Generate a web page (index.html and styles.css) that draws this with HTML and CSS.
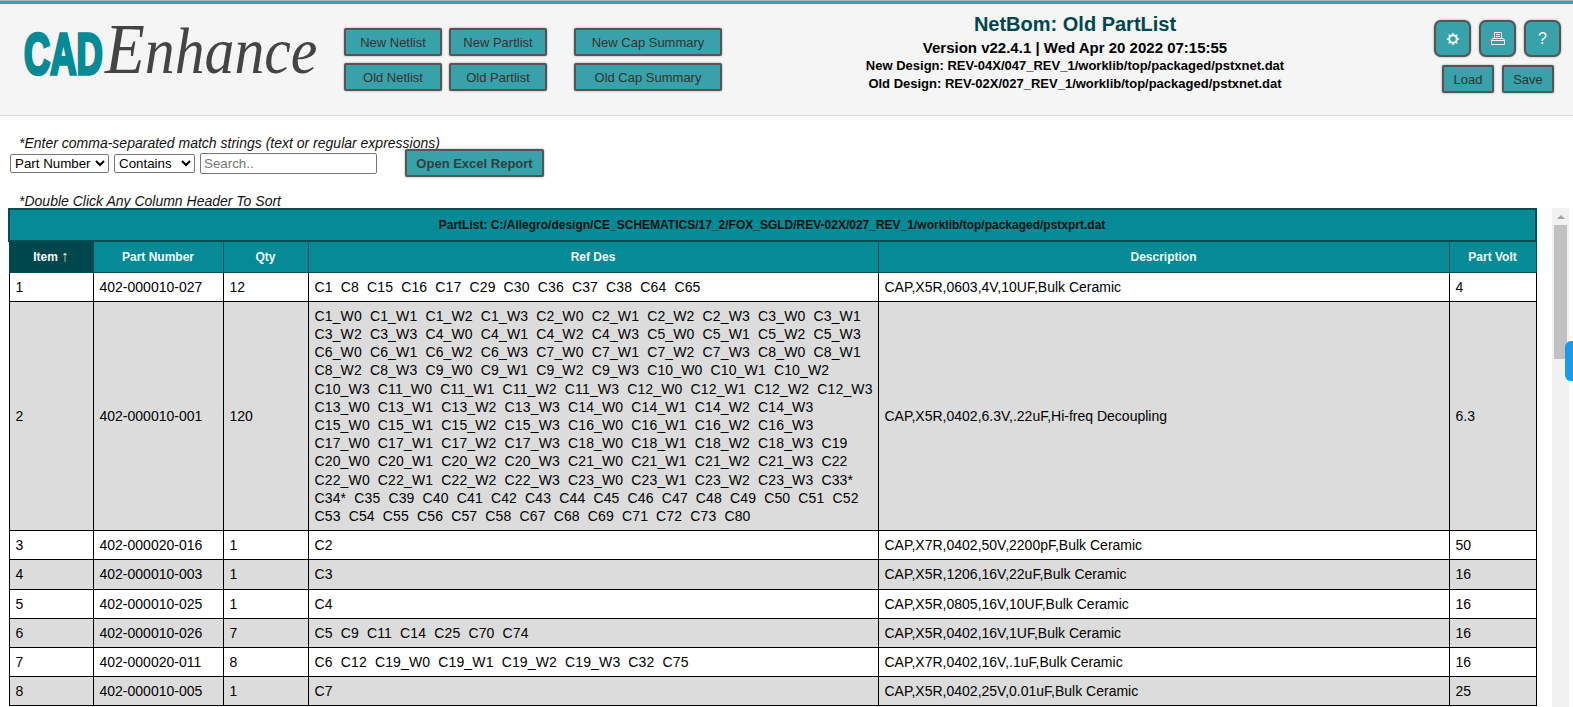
FILE: index.html
```html
<!DOCTYPE html>
<html lang="en">
<head>
<meta charset="utf-8">
<title>NetBom: Old PartList</title>
<link rel="stylesheet" href="styles.css">
</head>
<body>
<header class="topbar">
  <svg class="logo" width="300" height="70" viewBox="0 0 300 70">
    <text class="logo-cad" transform="translate(0 57.5) scale(0.64 1)">CAD</text>
    <text class="logo-enh" transform="translate(81 57) scale(0.905 1)"><tspan class="logo-e">E</tspan>nhance</text>
  </svg>
  <div class="btn-grid">
    <button class="btn">New Netlist</button>
    <button class="btn">New Partlist</button>
    <button class="btn">Old Netlist</button>
    <button class="btn">Old Partlist</button>
  </div>
  <div class="btn-col">
    <button class="btn">New Cap Summary</button>
    <button class="btn">Old Cap Summary</button>
  </div>
  <div class="info">
    <h1>NetBom: Old PartList</h1>
    <div class="version">Version v22.4.1 | Wed Apr 20 2022 07:15:55</div>
    <div class="design">New Design: REV-04X/047_REV_1/worklib/top/packaged/pstxnet.dat</div>
    <div class="design">Old Design: REV-02X/027_REV_1/worklib/top/packaged/pstxnet.dat</div>
  </div>
  <div class="tools">
    <div class="tool-row">
      <button class="icon-btn" aria-label="Settings">
        <svg width="16" height="16" viewBox="0 0 16 16"><circle cx="8" cy="8" r="3.8" fill="none" stroke="#fff" stroke-width="2"/><path d="M8 1.8v1.6M8 12.6v1.6M1.8 8h1.6M12.6 8h1.6M3.6 3.6l1.1 1.1M11.3 11.3l1.1 1.1M3.6 12.4l1.1-1.1M11.3 4.7l1.1-1.1" stroke="#fff" stroke-width="1.3"/></svg>
      </button>
      <button class="icon-btn" aria-label="Print">
        <svg width="16" height="16" viewBox="0 0 16 16" fill="none" stroke="#e8f6f6" stroke-width="1"><path d="M4.5 1.5h7v6h-7zM6 3.5h4M6 5.5h4M1.5 9.5h13v4h-13zM2.5 7.5h11l1 2h-13z"/></svg>
      </button>
      <button class="icon-btn qm">?</button>
    </div>
    <div class="tool-row small">
      <button class="btn">Load</button>
      <button class="btn">Save</button>
    </div>
  </div>
</header>

<section class="filters">
  <p class="hint">*Enter comma-separated match strings (text or regular expressions)</p>
  <div class="filter-row">
    <select class="sel sel-a"><option>Part Number</option></select>
    <select class="sel sel-b"><option>Contains</option></select>
    <input class="search" type="text" placeholder="Search..">
    <button class="btn excel">Open Excel Report</button>
  </div>
  <p class="hint second">*Double Click Any Column Header To Sort</p>
</section>

<main class="table-area">
  <table class="parts">
    <colgroup>
      <col class="c1"><col class="c2"><col class="c3"><col class="c4"><col class="c5"><col class="c6">
    </colgroup>
    <thead>
      <tr><th colspan="6" class="band">PartList: C:/Allegro/design/CE_SCHEMATICS/17_2/FOX_SGLD/REV-02X/027_REV_1/worklib/top/packaged/pstxprt.dat</th></tr>
      <tr>
        <th class="head sorted">Item <span class="arrow">↑</span></th>
        <th class="head">Part Number</th>
        <th class="head">Qty</th>
        <th class="head">Ref Des</th>
        <th class="head">Description</th>
        <th class="head">Part Volt</th>
      </tr>
    </thead>
    <tbody>
      <tr><td>1</td><td>402-000010-027</td><td>12</td><td class="refs">C1  C8  C15  C16  C17  C29  C30  C36  C37  C38  C64  C65</td><td>CAP,X5R,0603,4V,10UF,Bulk Ceramic</td><td>4</td></tr>
      <tr><td>2</td><td>402-000010-001</td><td>120</td><td class="refs">C1_W0  C1_W1  C1_W2  C1_W3  C2_W0  C2_W1  C2_W2  C2_W3  C3_W0  C3_W1  C3_W2  C3_W3  C4_W0  C4_W1  C4_W2  C4_W3  C5_W0  C5_W1  C5_W2  C5_W3  C6_W0  C6_W1  C6_W2  C6_W3  C7_W0  C7_W1  C7_W2  C7_W3  C8_W0  C8_W1  C8_W2  C8_W3  C9_W0  C9_W1  C9_W2  C9_W3  C10_W0  C10_W1  C10_W2  C10_W3  C11_W0  C11_W1  C11_W2  C11_W3  C12_W0  C12_W1  C12_W2  C12_W3  C13_W0  C13_W1  C13_W2  C13_W3  C14_W0  C14_W1  C14_W2  C14_W3  C15_W0  C15_W1  C15_W2  C15_W3  C16_W0  C16_W1  C16_W2  C16_W3  C17_W0  C17_W1  C17_W2  C17_W3  C18_W0  C18_W1  C18_W2  C18_W3  C19  C20_W0  C20_W1  C20_W2  C20_W3  C21_W0  C21_W1  C21_W2  C21_W3  C22  C22_W0  C22_W1  C22_W2  C22_W3  C23_W0  C23_W1  C23_W2  C23_W3  C33*  C34*  C35  C39  C40  C41  C42  C43  C44  C45  C46  C47  C48  C49  C50  C51  C52  C53  C54  C55  C56  C57  C58  C67  C68  C69  C71  C72  C73  C80</td><td>CAP,X5R,0402,6.3V,.22uF,Hi-freq Decoupling</td><td>6.3</td></tr>
      <tr><td>3</td><td>402-000020-016</td><td>1</td><td class="refs">C2</td><td>CAP,X7R,0402,50V,2200pF,Bulk Ceramic</td><td>50</td></tr>
      <tr><td>4</td><td>402-000010-003</td><td>1</td><td class="refs">C3</td><td>CAP,X5R,1206,16V,22uF,Bulk Ceramic</td><td>16</td></tr>
      <tr><td>5</td><td>402-000010-025</td><td>1</td><td class="refs">C4</td><td>CAP,X5R,0805,16V,10UF,Bulk Ceramic</td><td>16</td></tr>
      <tr><td>6</td><td>402-000010-026</td><td>7</td><td class="refs">C5  C9  C11  C14  C25  C70  C74</td><td>CAP,X5R,0402,16V,1UF,Bulk Ceramic</td><td>16</td></tr>
      <tr><td>7</td><td>402-000020-011</td><td>8</td><td class="refs">C6  C12  C19_W0  C19_W1  C19_W2  C19_W3  C32  C75</td><td>CAP,X7R,0402,16V,.1uF,Bulk Ceramic</td><td>16</td></tr>
      <tr><td>8</td><td>402-000010-005</td><td>1</td><td class="refs">C7</td><td>CAP,X5R,0402,25V,0.01uF,Bulk Ceramic</td><td>25</td></tr>
    </tbody>
  </table>
  <div class="scrollbar">
    <div class="scroll-up"></div>
    <div class="scroll-thumb"></div>
  </div>
</main>
<div class="side-tab"></div>
</body>
</html>
```
FILE: styles.css
```css
* { box-sizing: border-box; }
html, body { height: 707px; overflow: hidden; }
body {
  margin: 0;
  background: #fff;
  color: #000;
  font-family: "Liberation Sans", Arial, sans-serif;
  font-size: 14px;
}

/* top bar */
.topbar {
  display: flex;
  height: 116px;
  padding-top: 4px;
  background: linear-gradient(#a9b8b9 1px, #38a1aa 1px, #38a1aa 4px, #f5f5f5 4px);
  border-bottom: 1px solid #ddd;
}
.logo { flex: none; margin: 12px 0 0 24px; width: 300px; height: 70px; overflow: visible; }
.logo-cad {
  font-family: "Liberation Sans", sans-serif;
  font-weight: 700;
  font-size: 56.7px;
  fill: #058a96;
  stroke: #058a96;
  stroke-width: 3.4px;
}
.logo-enh {
  font-family: "Liberation Serif", serif;
  font-style: italic;
  font-size: 66px;
  fill: #444;
}
.logo-e { font-size: 72px; }

.btn {
  height: 28px;
  padding: 0;
  background: #38a1aa;
  border: 2px solid #555;
  border-radius: 2px;
  box-shadow: 0 0 2px #888;
  color: #333;
  font-family: "Liberation Sans", Arial, sans-serif;
  font-size: 13px;
}

.btn-grid {
  flex: none;
  display: grid;
  grid-template-columns: 98px 98px;
  gap: 7px;
  margin: 24px 0 0 20px;
  align-content: start;
}
.btn-col {
  flex: none;
  display: flex;
  flex-direction: column;
  gap: 7px;
  width: 148px;
  margin: 24px 0 0 27px;
}

.info {
  flex: none;
  width: 640px;
  margin: 8px 0 0 33px;
  text-align: center;
}
.info h1 {
  margin: 0;
  font-size: 20px;
  line-height: 25px;
  font-weight: 700;
  color: #00464d;
}
.version { font-size: 15px; font-weight: 700; line-height: 19px; margin-top: 1px; }
.design { font-size: 13px; font-weight: 700; line-height: 18px; }

.tools { flex: none; margin: 16px 0 0 39px; width: 127px; }
.tool-row { display: flex; gap: 8px; }
.tool-row.small { margin-top: 8px; padding-left: 8px; }
.tool-row.small .btn { width: 52px; }
.icon-btn {
  display: flex;
  align-items: center;
  justify-content: center;
  width: 37px;
  height: 37px;
  padding: 0;
  background: #38a1aa;
  border: 2px solid #555;
  border-radius: 7px;
  box-shadow: 0 0 2px #888;
  color: #fff;
  font-family: "Liberation Sans", Arial, sans-serif;
}
.qm { font-size: 16px; }

/* filters */
.filters { height: 92px; padding: 19px 0 0 10px; }
.hint {
  margin: 0 0 0 9px;
  font-style: italic;
  font-size: 14px;
  line-height: 16px;
  color: #111;
}
.hint.second { margin-top: 16px; }
.filter-row { display: flex; align-items: center; height: 28px; margin-top: -2px; }
.sel {
  height: 19px;
  padding: 0;
  background: #fff;
  border: 1px solid #767676;
  border-radius: 2px;
  color: #000;
  font-family: "Liberation Sans", Arial, sans-serif;
  font-size: 13.33px;
}
.sel-a { width: 99px; margin-right: 5px; }
.sel-b { width: 81px; margin-right: 5px; }
.search {
  width: 177px;
  height: 21px;
  padding: 1px 3px;
  border: 1px solid #767676;
  border-radius: 2px;
  font-family: "Liberation Sans", Arial, sans-serif;
  font-size: 13.33px;
}
.search::placeholder { color: #757575; }
.excel {
  width: 139px;
  margin-left: 28px;
  font-weight: 700;
  color: #2f3f40;
}

/* table */
.table-area {
  display: flex;
  align-items: flex-start;
  padding-left: 8px;
}
.parts {
  flex: none;
  width: 1527px;
  table-layout: fixed;
  border-collapse: collapse;
  line-height: 18.2px;
}
.c1 { width: 84px; }
.c2 { width: 130px; }
.c3 { width: 85px; }
.c4 { width: 570px; }
.c5 { width: 571px; }
.c6 { width: 87px; }
.parts th {
  background: #058a96;
  border: 1px solid #004d52;
  font-size: 12px;
  font-weight: 700;
  text-align: center;
  padding: 0;
}
.band { height: 32px; color: #111; border-width: 2px !important; padding-right: 1px !important; }
.head { height: 31px; color: #f4fbfb; }
.parts .sorted { background: #00464d; }
.arrow { font-size: 15px; font-weight: 400; color: #f3efc8; }
.parts td {
  padding: 5px 6px;
  border: 1px solid #000;
  vertical-align: middle;
}
.parts .refs { padding-right: 2px; letter-spacing: 0.14px; white-space: pre-wrap; }
.parts tbody tr:nth-child(even) td { background: #dcdcdc; }

/* scrollbar */
.scrollbar {
  flex: none;
  width: 17px;
  height: 499px;
  margin-left: 15px;
  background: #f1f1f1;
  display: flex;
  flex-direction: column;
  align-items: center;
}
.scroll-up {
  width: 0;
  height: 0;
  margin: 7px 0 4px;
  border-left: 4px solid transparent;
  border-right: 4px solid transparent;
  border-bottom: 4px solid #a3a3a3;
}
.scroll-thumb { width: 13px; height: 134px; margin-top: 2px; background: #c1c1c1; }
.side-tab {
  position: absolute;
  right: 0;
  top: 341px;
  width: 8px;
  height: 40px;
  background: #1a9be8;
  border-radius: 6px 0 0 6px;
}
```
